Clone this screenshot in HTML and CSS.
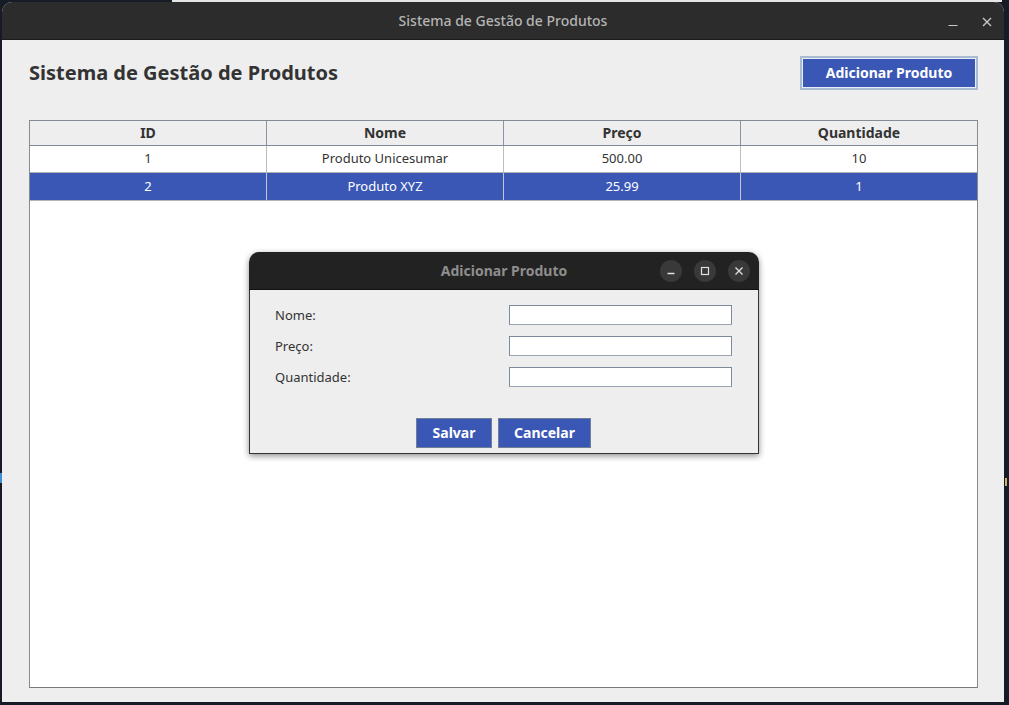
FILE: index.html
```html
<!DOCTYPE html>
<html lang="pt">
<head>
<meta charset="utf-8">
<title>Sistema de Gestão de Produtos</title>
<link rel="stylesheet" href="styles.css">
</head>
<body>
<div class="desktop">
  <div class="behind"></div>
  <div class="side-left"></div>
  <div class="side-right"></div>
  <div class="window">
    <div class="titlebar">
      <span class="title">Sistema de Gestão de Produtos</span>
      <div class="wctrls">
        <svg width="12" height="12" viewBox="0 0 12 12"><path d="M1.5 9.5h9" stroke="#c8c8c8" stroke-width="1.2"/></svg>
        <svg width="12" height="12" viewBox="0 0 12 12"><path d="M2 2l8 8M10 2l-8 8" stroke="#c8c8c8" stroke-width="1.4"/></svg>
      </div>
    </div>
    <div class="content">
      <div class="header">
        <h1>Sistema de Gestão de Produtos</h1>
        <button class="btn btn-add">Adicionar Produto</button>
      </div>
      <div class="table">
        <div class="row head">
          <div class="cell">ID</div>
          <div class="cell">Nome</div>
          <div class="cell">Preço</div>
          <div class="cell">Quantidade</div>
        </div>
        <div class="row r1">
          <div class="cell">1</div>
          <div class="cell">Produto Unicesumar</div>
          <div class="cell">500.00</div>
          <div class="cell">10</div>
        </div>
        <div class="row r2 selected">
          <div class="cell">2</div>
          <div class="cell">Produto XYZ</div>
          <div class="cell">25.99</div>
          <div class="cell">1</div>
        </div>
      </div>
    </div>
  </div>

  <div class="dialog">
    <div class="dtitlebar">
      <span class="dtitle">Adicionar Produto</span>
      <div class="dctrls">
        <span class="circ"><svg width="10" height="10" viewBox="0 0 10 10"><path d="M1.5 7.5h7" stroke="#e0e0e0" stroke-width="1.3"/></svg></span>
        <span class="circ"><svg width="10" height="10" viewBox="0 0 10 10"><rect x="1.5" y="1.5" width="7" height="7" fill="none" stroke="#e0e0e0" stroke-width="1.2"/></svg></span>
        <span class="circ"><svg width="10" height="10" viewBox="0 0 10 10"><path d="M1.5 1.5l7 7M8.5 1.5l-7 7" stroke="#e0e0e0" stroke-width="1.3"/></svg></span>
      </div>
    </div>
    <div class="dbody">
      <div class="form">
        <label>Nome:</label><input type="text">
        <label>Preço:</label><input type="text">
        <label>Quantidade:</label><input type="text">
      </div>
      <div class="actions">
        <button class="btn btn-small btn-save">Salvar</button>
        <button class="btn btn-small btn-cancel">Cancelar</button>
      </div>
    </div>
  </div>
</div>
</body>
</html>
```

FILE: styles.css
```css
* { box-sizing: border-box; }
html, body {
  margin: 0;
  padding: 0;
  width: 1009px;
  height: 705px;
  overflow: hidden;
  background: #161b26;
  font-family: "Noto Sans", "Open Sans", sans-serif;
}
.desktop {
  position: relative;
  width: 1009px;
  height: 705px;
  padding: 2px 0 0 2px;
}
.behind {
  position: absolute;
  left: 172px;
  top: 0;
  width: 830px;
  height: 2px;
  background: #e6e6e6;
}
.side-left {
  position: absolute;
  left: 0;
  top: 473px;
  width: 2px;
  height: 10px;
  background: #3d8fd8;
}
.side-right {
  position: absolute;
  left: 1005px;
  top: 478px;
  width: 2px;
  height: 8px;
  background: #c9b070;
}
.window {
  width: 1002px;
  height: 700px;
  display: flex;
  flex-direction: column;
  border-radius: 10px 10px 0 0;
  overflow: hidden;
  background: #eeeeee;
}
.titlebar {
  height: 38px;
  flex: none;
  background: #2c2c2c;
  border-bottom: 1px solid #1c1c1c;
  display: flex;
  align-items: center;
  justify-content: center;
  position: relative;
}
.title {
  color: #b4b4b4;
  font-size: 14px;
  font-weight: 500;
}
.wctrls {
  position: absolute;
  right: 11px;
  top: 14px;
  display: flex;
  gap: 22px;
}
.content {
  flex: 1;
  display: flex;
  flex-direction: column;
  padding: 16px 26px 14px 27px;
}
.header {
  display: flex;
  align-items: center;
  justify-content: space-between;
  height: 34px;
}
h1 {
  margin: 0;
  font-size: 20px;
  font-weight: 700;
  color: #333333;
  padding-bottom: 2px;
}
.btn {
  font-family: "Noto Sans", "Open Sans", sans-serif;
  font-weight: 700;
  color: #ffffff;
  background: #3b57b6;
  cursor: pointer;
}
.btn-add {
  width: 178px;
  height: 34px;
  font-size: 14px;
  border: 2px solid #a9bbd0;
  box-shadow: inset 0 0 0 1px #e8eef5;
  padding: 0 0 2px;
}
.table {
  margin-top: 30px;
  flex: 1;
  background: #ffffff;
  border: 1px solid #858b93;
  border-bottom-color: #7a7a7a;
  display: flex;
  flex-direction: column;
}
.row {
  display: grid;
  grid-template-columns: 237px 237px 237px 1fr;
}
.cell {
  display: flex;
  align-items: center;
  justify-content: center;
  font-size: 13px;
  color: #333333;
  border-right: 1px solid #bdbdbd;
}
.cell:last-child { border-right: none; }
.head {
  height: 25px;
  background: #eeeeee;
  border-bottom: 1px solid #7d8a9c;
}
.head .cell {
  font-weight: 700;
  font-size: 14px;
  border-right-color: #8a96a6;
  padding-bottom: 2px;
}
.r1 {
  height: 27px;
  border-bottom: 1px solid #b4b4b4;
}
.r1 .cell { padding-bottom: 2px; }
.r2 {
  height: 28px;
  border-bottom: 1px solid #b4b4b4;
}
.r2 .cell { padding-bottom: 2px; }
.selected { background: #3b57b6; }
.selected .cell { color: #ffffff; border-right-color: #c0c6d8; }

.dialog {
  position: absolute;
  left: 249px;
  top: 252px;
  width: 510px;
  height: 202px;
  display: flex;
  flex-direction: column;
  border-radius: 10px 10px 0 0;
  overflow: hidden;
  box-shadow: 0 2px 6px rgba(0, 0, 0, 0.45);
}
.dtitlebar {
  height: 38px;
  flex: none;
  background: #222222;
  border-bottom: 1px solid #111111;
  display: flex;
  align-items: center;
  justify-content: center;
  position: relative;
}
.dtitle {
  color: #8e8e8e;
  font-size: 14px;
  font-weight: 700;
}
.dctrls {
  position: absolute;
  right: 9px;
  top: 8px;
  display: flex;
  gap: 12px;
}
.circ {
  width: 22px;
  height: 22px;
  border-radius: 50%;
  background: #393939;
  display: flex;
  align-items: center;
  justify-content: center;
}
.dbody {
  flex: 1;
  background: #eeeeee;
  border: 1px solid #333333;
  border-top: none;
  display: flex;
  flex-direction: column;
  padding: 15px 26px 5px 25px;
}
.form {
  display: grid;
  grid-template-columns: 234px 223px;
  row-gap: 11px;
  align-items: center;
}
label {
  font-size: 13px;
  color: #333333;
}
input {
  width: 223px;
  height: 20px;
  border: 1px solid #7d8a9c;
  border-bottom-color: #9aa4b2;
  background: #ffffff;
  margin: 0;
  padding: 0;
}
.actions {
  margin-top: auto;
  display: flex;
  justify-content: center;
  gap: 6px;
}
.btn-small {
  height: 30px;
  font-size: 14px;
  border: 1px solid #6f7f98;
  padding: 0 0 2px;
}
.btn-save { width: 76px; }
.btn-cancel { width: 93px; }
```
